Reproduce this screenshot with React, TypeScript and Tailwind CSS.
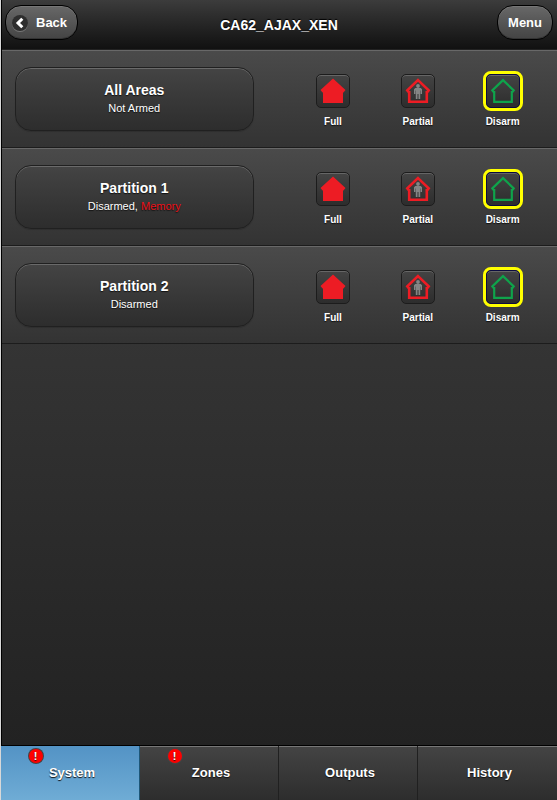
import { useState } from 'react'

type Mode = 'full' | 'partial' | 'disarm'

interface Area {
  name: string
  status: string
  memory?: boolean
}

const areas: Area[] = [
  { name: 'All Areas', status: 'Not Armed' },
  { name: 'Partition 1', status: 'Disarmed', memory: true },
  { name: 'Partition 2', status: 'Disarmed' },
]

const modes: { id: Mode; label: string }[] = [
  { id: 'full', label: 'Full' },
  { id: 'partial', label: 'Partial' },
  { id: 'disarm', label: 'Disarm' },
]

const tabs = [
  { label: 'System', alert: true },
  { label: 'Zones', alert: true },
  { label: 'Outputs', alert: false },
  { label: 'History', alert: false },
]

function HouseIcon({ mode }: { mode: Mode }) {
  if (mode === 'full') {
    return (
      <svg width="26" height="26" viewBox="0 0 26 26" aria-hidden="true">
        <path d="M13 0.5 25.5 12 23.5 14.5H23V25H3V14.5H2.5L0.5 12Z" fill="#ed1c24" />
      </svg>
    )
  }

  return (
    <svg width="26" height="26" viewBox="0 0 26 26" aria-hidden="true">
      <path
        d="M13 2.1 23.7 12.4 22.2 14.2H21.8V23.8H4.2V14.2H3.8L2.3 12.4Z"
        fill="none"
        stroke={mode === 'partial' ? '#ed1c24' : '#0fa34b'}
        strokeWidth={mode === 'partial' ? 2.6 : 2.2}
      />
      {mode === 'partial' && (
        <g fill="#858585">
          <circle cx="13" cy="8" r="1.9" />
          <path d="M10.3 10H15.7L17 11.2V16H15.6V12.5H15.2V21H13.5V16H12.5V21H10.8V12.5H10.4V16H9V11.2Z" />
        </g>
      )}
    </svg>
  )
}

function AreaRow({ area }: { area: Area }) {
  const [mode, setMode] = useState<Mode>('disarm')

  return (
    <li className="flex items-start justify-between border-t border-b border-t-[#686868] border-b-[#1c1c1c] bg-linear-to-b from-[#4a4a4a] to-[#333] pt-4 pr-3 pb-4 pl-[13px]">
      <button
        type="button"
        className="h-16 w-[45%] rounded-[16px] border border-[#202020] bg-linear-to-b from-[#444] to-[#2d2d2d] text-center shadow-[inset_0_1px_0_#6a6a6a,0_1px_1px_rgba(0,0,0,0.15)] text-shadow-[0_1px_1px_#111]"
      >
        <span className="block text-[14px] leading-[18px] font-bold">{area.name}</span>
        <span className="block text-[11px] leading-[18px]">
          {area.status}
          {area.memory && (
            <>
              , <span className="text-[#ed1019]">Memory</span>
            </>
          )}
        </span>
      </button>
      <div className="grid w-[48%] grid-cols-3">
        {modes.map((m) => (
          <button
            key={m.id}
            type="button"
            aria-pressed={mode === m.id}
            onClick={() => setMode(m.id)}
            className="flex flex-col items-center gap-[5px] pt-1 text-[10px] leading-3 font-bold text-shadow-[0_1px_1px_#111]"
          >
            <span
              className={`flex h-10 w-10 items-center justify-center rounded-[8px] border-[3px] ${
                mode === m.id ? 'border-[#ffff00]' : 'border-transparent'
              }`}
            >
              <span
                className={`flex h-[34px] w-[34px] items-center justify-center rounded-[5px] border bg-linear-to-b from-[#444] to-[#2d2d2d] shadow-[inset_0_1px_0_#666] ${
                  mode === m.id ? 'border-[#0c0c40]' : 'border-[#1c1c1c]'
                }`}
              >
                <HouseIcon mode={m.id} />
              </span>
            </span>
            <span>{m.label}</span>
          </button>
        ))}
      </div>
    </li>
  )
}

export default function App() {
  const [activeTab, setActiveTab] = useState('System')

  return (
    <div className="flex min-h-screen flex-col border-l border-[#d8d8d8] bg-[#222] font-['Liberation_Sans',Arial,sans-serif] text-white">
      <div className="flex flex-1 flex-col border-l border-black bg-linear-to-b from-[#444] to-[#222]">
        <header className="grid h-[50px] grid-cols-[1fr_auto_1fr] items-start border-b border-[#222] bg-linear-to-b from-[#3c3c3c] to-[#111] pt-[5px] pr-1 pl-[3px] text-shadow-[0_-1px_1px_#000]">
          <button
            type="button"
            className="flex h-[35px] items-center gap-2 justify-self-start rounded-[16px] border border-black bg-linear-to-b from-[#686868] to-[#444] pr-[10px] pl-[6px] text-[13px] font-bold shadow-[inset_0_1px_0_#777,inset_0_-1px_0_#333]"
          >
            <span className="flex h-4 w-4 items-center justify-center rounded-full bg-[#2e2e2e] shadow-[0_1px_0_#777]">
              <svg width="10" height="12" viewBox="0 0 10 12" aria-hidden="true">
                <path d="M7.3 1.8 3 6 7.3 10.2" fill="none" stroke="#fff" strokeWidth="3" />
              </svg>
            </span>
            Back
          </button>
          <h1 className="pt-[10px] text-[14px] leading-5 font-bold">CA62_AJAX_XEN</h1>
          <button
            type="button"
            className="h-[35px] justify-self-end rounded-[16px] border border-black bg-linear-to-b from-[#686868] to-[#444] px-[10px] text-[13px] font-bold shadow-[inset_0_1px_0_#777,inset_0_-1px_0_#333]"
          >
            Menu
          </button>
        </header>

        <main className="flex-1">
          <ul>
            {areas.map((area) => (
              <AreaRow key={area.name} area={area} />
            ))}
          </ul>
        </main>
      </div>

      <nav className="grid grid-cols-4 border-t border-black">
        {tabs.map((tab) => (
          <button
            key={tab.label}
            type="button"
            onClick={() => setActiveTab(tab.label)}
            className={`relative h-[54px] border-r pl-1 text-[13px] font-bold last:border-r-0 text-shadow-[0_1px_1px_#111] ${
              activeTab === tab.label
                ? 'border-[#1d5678] bg-linear-to-b from-[#5393c5] to-[#6facd5]'
                : 'border-[#202020] bg-linear-to-b from-[#444] to-[#2d2d2d] shadow-[inset_0_1px_0_#777]'
            }`}
          >
            {tab.label}
            {tab.alert && (
              <span className="absolute top-[3px] left-1/4 flex h-[14px] w-[14px] -translate-x-1/2 items-center justify-center rounded-full bg-[#f00] text-[11px] leading-none shadow-[0_0_0_1px_#444]">
                !
              </span>
            )}
          </button>
        ))}
      </nav>
    </div>
  )
}
